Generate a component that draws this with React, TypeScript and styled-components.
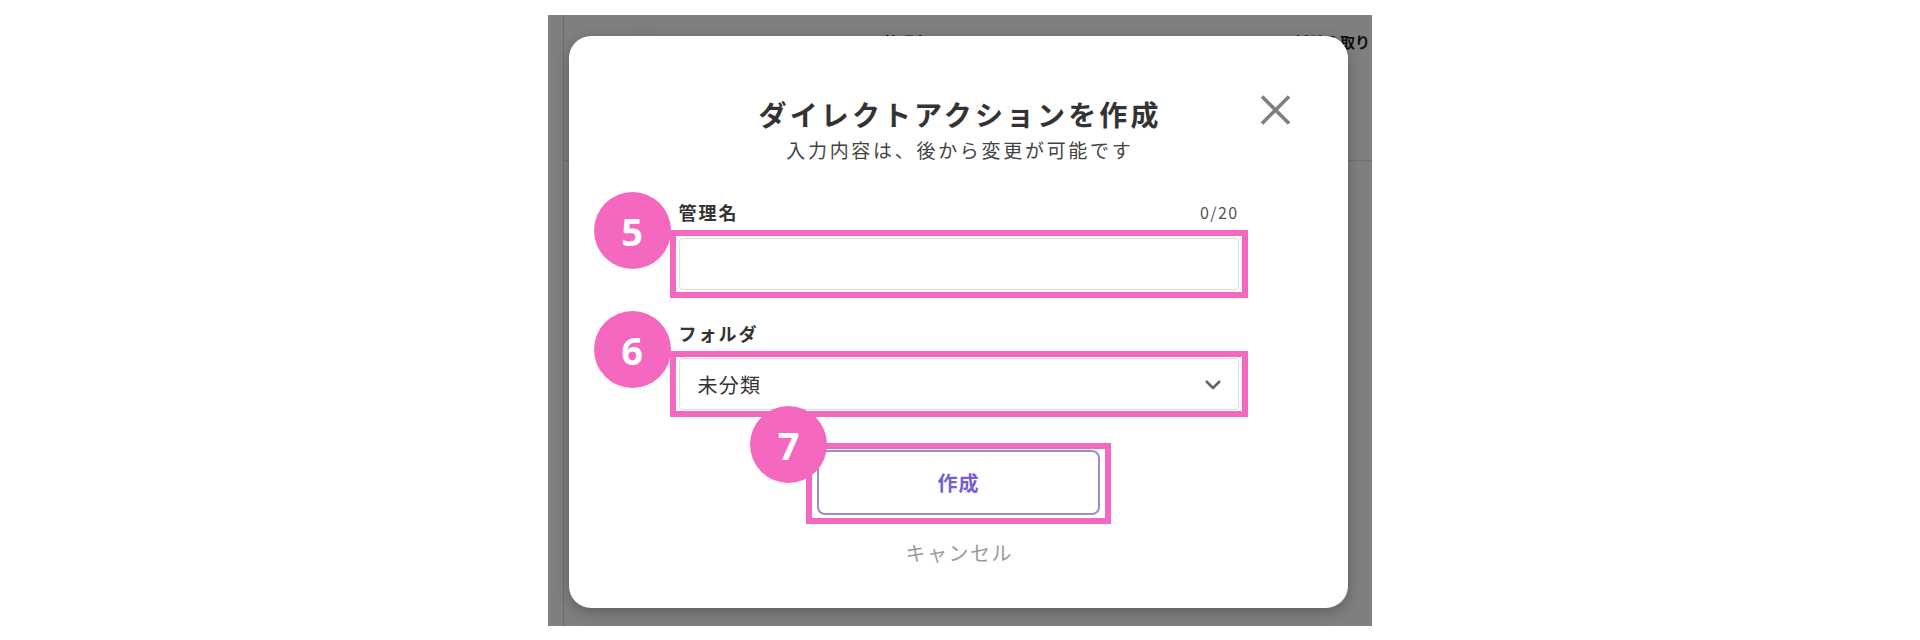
import React from 'react';
import styled, { createGlobalStyle } from 'styled-components';

const PINK = '#f469bf';

const GlobalStyle = createGlobalStyle`
    html, body {
        margin: 0;
        padding: 0;
        background: #fff;
    }
    body {
        font-family: "Noto Sans CJK JP", "Noto Sans", sans-serif;
    }
    * {
        box-sizing: border-box;
    }
`;

const Stage = styled.div`
    width: 1920px;
    height: 640px;
    padding-top: 15px;
    display: flex;
    justify-content: center;
    overflow: hidden;
`;

const Frame = styled.div`
    position: relative;
    width: 824px;
    height: 611px;
    display: flex;
    background: #fff;
    overflow: hidden;
`;

const Sidebar = styled.div`
    width: 16px;
    flex-shrink: 0;
    border-right: 1px solid #d6d6d6;
`;

const PageMain = styled.div`
    flex: 1;
    display: flex;
    flex-direction: column;
`;

const PageHeader = styled.div`
    height: 146px;
    display: flex;
    align-items: flex-start;
    gap: 225px;
    padding: 13px 0 0 69px;
    border-bottom: 1px solid #e0e0e0;
`;

const Checkbox = styled.div`
    width: 26px;
    height: 22px;
    border-radius: 3px;
    background: #fbfbfb;
`;

const HeaderText = styled.div<{ $push?: boolean }>`
    margin-top: 4px;
    font-size: 15px;
    font-weight: 700;
    line-height: 20px;
    color: #222;
    white-space: nowrap;
    ${props => (props.$push ? 'margin-left: auto; margin-right: 2px;' : '')}
`;

const Overlay = styled.div`
    position: absolute;
    inset: 0;
    display: flex;
    justify-content: flex-start;
    padding: 21px 0 0 21px;
    background: rgba(0, 0, 0, 0.5);
`;

const Modal = styled.div`
    position: relative;
    width: 779px;
    height: 572px;
    display: flex;
    flex-direction: column;
    align-items: center;
    padding-top: 60px;
    background: #fff;
    border-radius: 22px;
    box-shadow: 0 4px 14px rgba(0, 0, 0, 0.25);
`;

const Title = styled.h2`
    margin: 0;
    padding-left: 3.1px;
    font-size: 28px;
    font-weight: 700;
    line-height: 36px;
    letter-spacing: 3.1px;
    color: #333;
`;

const Subtitle = styled.p`
    margin: 6px 0 0;
    padding-left: 2.7px;
    font-size: 19px;
    line-height: 24px;
    letter-spacing: 2.7px;
    color: #444;
`;

const CloseButton = styled.button`
    position: absolute;
    top: 59px;
    right: 57px;
    width: 31px;
    height: 30px;
    padding: 0;
    border: none;
    background: none;
    cursor: pointer;
`;

const Form = styled.div`
    width: 560px;
    margin-top: 39px;
    display: flex;
    flex-direction: column;
`;

const LabelRow = styled.div<{ $gap: number }>`
    display: flex;
    justify-content: space-between;
    align-items: center;
    height: 22px;
    margin-top: ${props => props.$gap}px;
`;

const Label = styled.label`
    font-size: 18px;
    font-weight: 700;
    letter-spacing: 2px;
    color: #333;
`;

const Counter = styled.span`
    font-size: 16px;
    letter-spacing: 1.4px;
    color: #555;
`;

const Highlight = styled.div<{ $pad: string }>`
    position: relative;
    border: 6px solid ${PINK};
    padding: ${props => props.$pad};
`;

const FieldHighlight = styled(Highlight)`
    margin: 7px -9px 0;
`;

const ButtonHighlight = styled(Highlight)`
    align-self: center;
    margin-top: 26px;
`;

const Badge = styled.div<{ $left: number; $top: number }>`
    position: absolute;
    left: ${props => props.$left}px;
    top: ${props => props.$top}px;
    z-index: 2;
    width: 77px;
    height: 77px;
    display: flex;
    align-items: center;
    justify-content: center;
    border-radius: 50%;
    background: ${PINK};
    color: #fff;
    font-family: "Open Sans", "Noto Sans", sans-serif;
    font-size: 38px;
    font-weight: 700;
`;

const TextInput = styled.input`
    display: block;
    width: 100%;
    height: 52px;
    padding: 0 18px;
    border: 1px solid #dcdcdc;
    border-radius: 4px;
    background: #fff;
    font-family: inherit;
    font-size: 18px;
    outline: none;
`;

const Select = styled.div`
    height: 52px;
    display: flex;
    align-items: center;
    justify-content: space-between;
    padding: 0 16px 0 18px;
    border: 1px solid #dcdcdc;
    border-radius: 4px;
    background: #fff;
`;

const SelectValue = styled.span`
    font-size: 20px;
    letter-spacing: 1.2px;
    color: #333;
`;

const PrimaryButton = styled.button`
    width: 283px;
    height: 65px;
    display: block;
    border: 2px solid #9a8dcf;
    border-radius: 8px;
    background: #fff;
    color: #7a5dd2;
    font-family: inherit;
    font-size: 20px;
    font-weight: 700;
    letter-spacing: 1px;
    cursor: pointer;
`;

const CancelLink = styled.button`
    align-self: center;
    margin-top: 16px;
    padding: 0 0 0 1.5px;
    border: none;
    background: none;
    color: #9a9a9a;
    font-family: inherit;
    font-size: 20px;
    line-height: 26px;
    letter-spacing: 1.5px;
    cursor: pointer;
`;

const CloseIcon = () => (
    <svg width="31" height="30" viewBox="0 0 31 30">
        <path d="M2 1.5 L29 28.5 M29 1.5 L2 28.5" stroke="#7f7f7f" strokeWidth="3.6" fill="none" />
    </svg>
);

const ChevronIcon = () => (
    <svg width="18" height="11" viewBox="0 0 18 11">
        <path d="M2 2 L9 9 L16 2" stroke="#666" strokeWidth="2.6" fill="none" strokeLinejoin="round" />
    </svg>
);

const App = () => (
    <>
        <GlobalStyle />
        <Stage>
            <Frame>
                <Sidebar />
                <PageMain>
                    <PageHeader>
                        <Checkbox />
                        <HeaderText>管理名</HeaderText>
                        <HeaderText $push>一括読み取り</HeaderText>
                    </PageHeader>
                </PageMain>
                <Overlay>
                    <Modal>
                        <Title>ダイレクトアクションを作成</Title>
                        <Subtitle>入力内容は、後から変更が可能です</Subtitle>
                        <CloseButton aria-label="閉じる">
                            <CloseIcon />
                        </CloseButton>
                        <Form>
                            <LabelRow $gap={0}>
                                <Label>管理名</Label>
                                <Counter>0/20</Counter>
                            </LabelRow>
                            <FieldHighlight $pad="2px 3px">
                                <Badge $left={-82} $top={-44}>5</Badge>
                                <TextInput />
                            </FieldHighlight>
                            <LabelRow $gap={24}>
                                <Label>フォルダ</Label>
                            </LabelRow>
                            <FieldHighlight $pad="1px 3px 1px">
                                <Badge $left={-82} $top={-46}>6</Badge>
                                <Select>
                                    <SelectValue>未分類</SelectValue>
                                    <ChevronIcon />
                                </Select>
                            </FieldHighlight>
                            <ButtonHighlight $pad="1px 5px 3px">
                                <Badge $left={-62} $top={-43}>7</Badge>
                                <PrimaryButton>作成</PrimaryButton>
                            </ButtonHighlight>
                            <CancelLink>キャンセル</CancelLink>
                        </Form>
                    </Modal>
                </Overlay>
            </Frame>
        </Stage>
    </>
);

export default App;
